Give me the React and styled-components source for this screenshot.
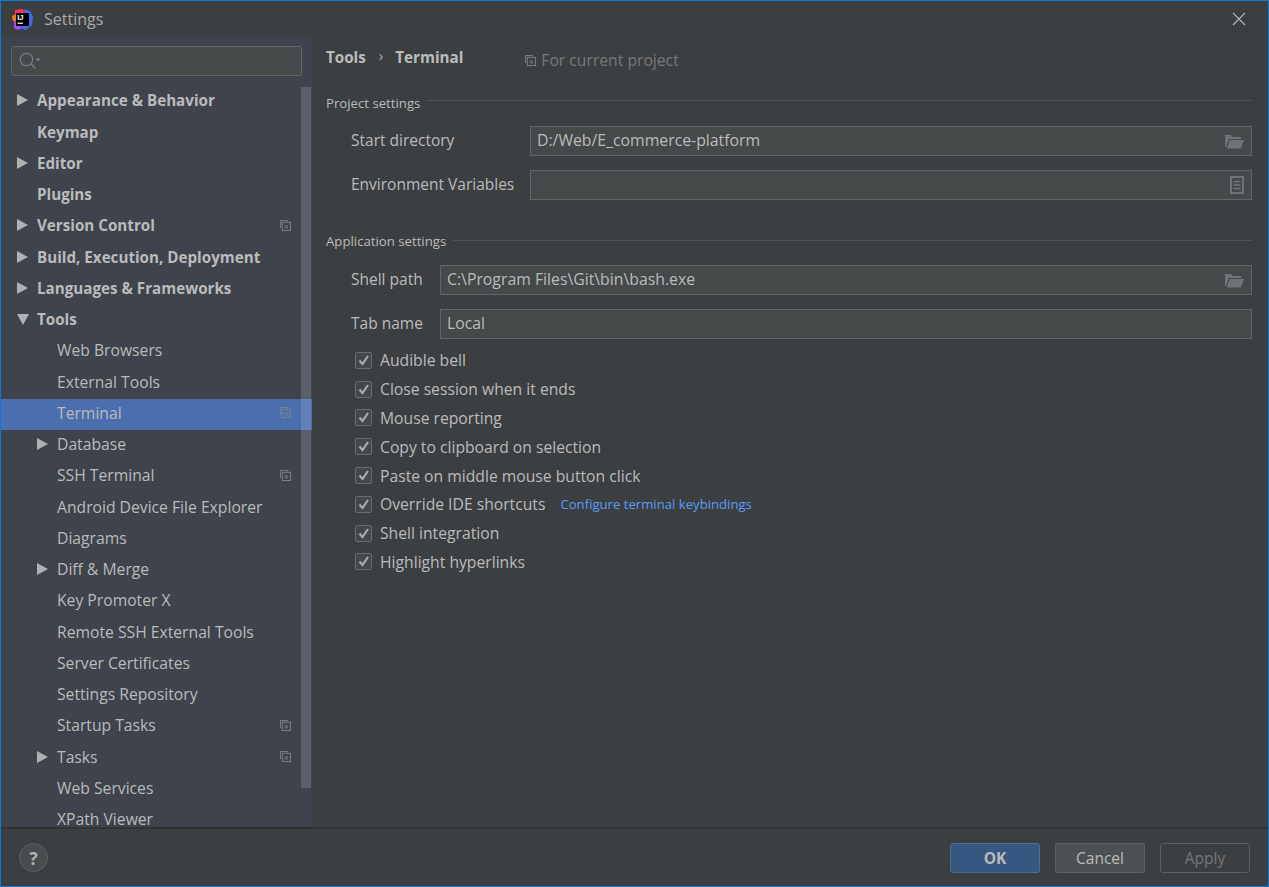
import React from 'react';
import styled, {createGlobalStyle} from 'styled-components';

const GlobalStyle = createGlobalStyle`
    html, body {
        margin: 0;
        padding: 0;
        background: #3c3f41;
    }
    body {
        font-family: "Open Sans", "Noto Sans", sans-serif;
        color: #bbbbbb;
    }
`;

const treeItems = [
    {label: 'Appearance & Behavior', top: true, arrow: 'right'},
    {label: 'Keymap', top: true},
    {label: 'Editor', top: true, arrow: 'right'},
    {label: 'Plugins', top: true},
    {label: 'Version Control', top: true, arrow: 'right', project: true},
    {label: 'Build, Execution, Deployment', top: true, arrow: 'right'},
    {label: 'Languages & Frameworks', top: true, arrow: 'right'},
    {label: 'Tools', top: true, arrow: 'down'},
    {label: 'Web Browsers'},
    {label: 'External Tools'},
    {label: 'Terminal', selected: true, project: true},
    {label: 'Database', arrow: 'right'},
    {label: 'SSH Terminal', project: true},
    {label: 'Android Device File Explorer'},
    {label: 'Diagrams'},
    {label: 'Diff & Merge', arrow: 'right'},
    {label: 'Key Promoter X'},
    {label: 'Remote SSH External Tools'},
    {label: 'Server Certificates'},
    {label: 'Settings Repository'},
    {label: 'Startup Tasks', project: true},
    {label: 'Tasks', arrow: 'right', project: true},
    {label: 'Web Services'},
    {label: 'XPath Viewer'},
];

const options = [
    'Audible bell',
    'Close session when it ends',
    'Mouse reporting',
    'Copy to clipboard on selection',
    'Paste on middle mouse button click',
    'Override IDE shortcuts',
    'Shell integration',
    'Highlight hyperlinks',
];

function ProjectIcon({size = 12}) {
    return (
        <svg width={size} height={size} viewBox="0 0 12 12" fill="none" stroke="#7f8489" strokeWidth="1">
            <path d="M8.5 1.5v-1h-8v8h1"/>
            <rect x="2.5" y="2.5" width="9" height="9"/>
            <path d="M5 6.5h4M5 8.5h4"/>
        </svg>
    );
}

function FolderIcon() {
    return (
        <svg width="19" height="15" viewBox="0 0 19 15" fill="#6d7378">
            <path d="M0 1h6l1.5 2H16v2H4L1 13H0z"/>
            <path d="M4.8 6H19l-3 8.5H1.6z"/>
        </svg>
    );
}

function DocIcon() {
    return (
        <svg width="14" height="18" viewBox="0 0 14 18" fill="none" stroke="#6d7378">
            <rect x="1" y="1" width="12" height="16" strokeWidth="2"/>
            <path d="M3.5 5.5h7M3.5 9h7M3.5 12.5h7" strokeWidth="1.4"/>
        </svg>
    );
}

function Logo() {
    return (
        <svg width="21" height="21" viewBox="0 0 21 21">
            <path d="M3 1l7-1 4 3-9 6-2 0z" fill="#fe2f6a"/>
            <path d="M0 7l4-2 1 7-4 0z" fill="#f97a12"/>
            <path d="M2 11l8 8-4 2-4-2z" fill="#b345f1"/>
            <path d="M12 0l6 2 3 6-1 8-6 5-6-2 7-12z" fill="#3f6de8"/>
            <rect x="4" y="4" width="13" height="13" fill="#000"/>
            <rect x="5.5" y="13.6" width="5.5" height="1.2" fill="#fff"/>
            <LogoText x="5.2" y="11.4">IJ</LogoText>
        </svg>
    );
}

function App() {
    return (
        <Window>
            <GlobalStyle/>
            <TitleBar>
                <Logo/>
                <TitleText>Settings</TitleText>
                <CloseButton>
                    <svg width="14" height="14" viewBox="0 0 14 14" stroke="#b4b6b8" strokeWidth="1.1">
                        <path d="M1 1l12 12M13 1L1 13"/>
                    </svg>
                </CloseButton>
            </TitleBar>

            <Body>
                <Sidebar>
                    <SearchBox>
                        <svg width="24" height="20" viewBox="0 0 24 20" fill="none" stroke="#7b8084" strokeWidth="1.2">
                            <circle cx="7.5" cy="7.5" r="6.2"/>
                            <path d="M12 12l4.5 4.5"/>
                            <path d="M16.5 6.5h5l-2.5 3z" fill="#7b8084" stroke="none"/>
                        </svg>
                    </SearchBox>
                    <Tree>
                        {treeItems.map((item) => (
                            <TreeRow key={item.label} $selected={item.selected} $nested={!item.top}>
                                <ArrowSlot>
                                    {item.arrow === 'right' && (
                                        <svg width="11" height="12" viewBox="0 0 11 12" fill="#afb1b3">
                                            <path d="M0 0l11 6-11 6z"/>
                                        </svg>
                                    )}
                                    {item.arrow === 'down' && (
                                        <svg width="12" height="11" viewBox="0 0 12 11" fill="#afb1b3">
                                            <path d="M0 0h12l-6 11z"/>
                                        </svg>
                                    )}
                                </ArrowSlot>
                                <TreeLabel $bold={item.top}>{item.label}</TreeLabel>
                                {item.project && (
                                    <TreeBadge>
                                        <ProjectIcon size={11}/>
                                    </TreeBadge>
                                )}
                            </TreeRow>
                        ))}
                        <ScrollThumb/>
                    </Tree>
                </Sidebar>

                <Content>
                    <Breadcrumbs>
                        <Crumb>Tools</Crumb>
                        <CrumbArrow>›</CrumbArrow>
                        <Crumb>Terminal</Crumb>
                        <ProjectHint>
                            <ProjectIcon size={11}/>
                            For current project
                        </ProjectHint>
                    </Breadcrumbs>

                    <SectionTitle $mt={11}>
                        <span>Project settings</span>
                        <SectionLine $shift={-6}/>
                    </SectionTitle>
                    <FieldRow $mt={12}>
                        <FieldLabel $width={179}>Start directory</FieldLabel>
                        <Field>
                            D:/Web/E_commerce-platform
                            <FieldIcon><FolderIcon/></FieldIcon>
                        </Field>
                    </FieldRow>
                    <FieldRow $mt={14}>
                        <FieldLabel $width={179}>Environment Variables</FieldLabel>
                        <Field>
                            <FieldIcon><DocIcon/></FieldIcon>
                        </Field>
                    </FieldRow>

                    <SectionTitle $mt={30}>
                        <span>Application settings</span>
                        <SectionLine $shift={-2}/>
                    </SectionTitle>
                    <FieldRow $mt={13}>
                        <FieldLabel $width={89}>Shell path</FieldLabel>
                        <Field>
                            {'C:\\Program Files\\Git\\bin\\bash.exe'}
                            <FieldIcon><FolderIcon/></FieldIcon>
                        </Field>
                    </FieldRow>
                    <FieldRow $mt={14}>
                        <FieldLabel $width={89}>Tab name</FieldLabel>
                        <Field>Local</Field>
                    </FieldRow>

                    <CheckList>
                        {options.map((label) => (
                            <CheckRow key={label}>
                                <CheckBox>
                                    <svg width="12" height="11" viewBox="0 0 12 11" fill="none" stroke="#a9abad" strokeWidth="2.2">
                                        <path d="M1.5 5.5l3 3.5 5.5-8"/>
                                    </svg>
                                </CheckBox>
                                {label}
                                {label === 'Override IDE shortcuts' && (
                                    <KeyLink>Configure terminal keybindings</KeyLink>
                                )}
                            </CheckRow>
                        ))}
                    </CheckList>
                </Content>
            </Body>

            <Footer>
                <HelpButton>?</HelpButton>
                <Buttons>
                    <Button $variant="primary">OK</Button>
                    <Button>Cancel</Button>
                    <Button $variant="disabled">Apply</Button>
                </Buttons>
            </Footer>
        </Window>
    );
}

const Window = styled.div`
    box-sizing: border-box;
    width: 1269px;
    height: 887px;
    display: flex;
    flex-direction: column;
    overflow: hidden;
    background: #3c3f41;
    border: 1px solid #0e79d1;
`;

const TitleBar = styled.div`
    flex: none;
    height: 35px;
    display: flex;
    align-items: center;
    padding: 1px 18px 0 11px;
    box-sizing: border-box;
`;

const LogoText = styled.text`
    font-family: "Liberation Sans", sans-serif;
    font-size: 7.5px;
    font-weight: 700;
    fill: #ffffff;
`;

const TitleText = styled.div`
    margin-left: 11px;
    font-size: 16px;
    color: #a9abad;
`;

const CloseButton = styled.div`
    margin-left: auto;
    display: flex;
    margin-right: 4px;
`;

const Body = styled.div`
    flex: 1;
    display: flex;
    min-height: 0;
`;

const Sidebar = styled.div`
    flex: none;
    width: 311px;
    display: flex;
    flex-direction: column;
    background: #3e434c;
`;

const SearchBox = styled.div`
    flex: none;
    box-sizing: border-box;
    height: 30px;
    margin: 10px 10px 0 10px;
    padding: 5px 0 0 7px;
    background: #45494a;
    border: 1px solid #646464;
    border-radius: 3px;
`;

const Tree = styled.div`
    position: relative;
    flex: 1;
    min-height: 0;
    overflow: hidden;
    padding-top: 10px;
`;

const ScrollThumb = styled.div`
    position: absolute;
    top: 11px;
    right: 1px;
    width: 10px;
    height: 701px;
    background: rgba(190, 195, 210, 0.22);
`;

const TreeRow = styled.div`
    box-sizing: border-box;
    height: 31.25px;
    display: flex;
    align-items: center;
    padding-bottom: 2.5px;
    padding-left: ${({$nested}) => ($nested ? '36px' : '16px')};
    background: ${({$selected}) => ($selected ? '#4b6eaf' : 'transparent')};
`;

const ArrowSlot = styled.div`
    flex: none;
    width: 20px;
    display: flex;
    align-items: center;
`;

const TreeLabel = styled.div`
    font-size: ${({$bold}) => ($bold ? '15.2px' : '15.7px')};
    font-weight: ${({$bold}) => ($bold ? 700 : 400)};
    white-space: nowrap;
`;

const TreeBadge = styled.div`
    margin-left: auto;
    margin-right: 21px;
    display: flex;
`;

const Content = styled.div`
    flex: 1;
    min-width: 0;
    padding: 0 16px 0 14px;
`;

const Breadcrumbs = styled.div`
    height: 45px;
    display: flex;
    align-items: center;
    padding-bottom: 4px;
    box-sizing: border-box;
`;

const Crumb = styled.div`
    font-size: 15.2px;
    font-weight: 700;
`;

const CrumbArrow = styled.div`
    margin: -3px 12px 0 13px;
    font-size: 15px;
    color: #a9abad;
`;

const ProjectHint = styled.div`
    margin-left: 62px;
    display: flex;
    align-items: center;
    gap: 5px;
    font-size: 15.7px;
    color: #787878;
    padding-top: 7px;
`;

const SectionTitle = styled.div`
    display: flex;
    align-items: center;
    height: 22px;
    margin-top: ${({$mt}) => $mt}px;
    font-size: 13.2px;
    gap: 7px;
`;

const SectionLine = styled.div`
    flex: 1;
    height: 1px;
    margin-top: ${({$shift}) => $shift}px;
    background: #515151;
`;

const FieldRow = styled.div`
    display: flex;
    align-items: center;
    margin-top: ${({$mt}) => $mt}px;
    padding-left: 25px;
`;

const FieldLabel = styled.div`
    flex: none;
    width: ${({$width}) => $width}px;
    padding-bottom: 2px;
    font-size: 15.5px;
    white-space: nowrap;
`;

const Field = styled.div`
    position: relative;
    flex: 1;
    box-sizing: border-box;
    height: 30px;
    line-height: 27px;
    padding-left: 6px;
    font-size: 15.8px;
    background: #45494a;
    border: 1px solid #646464;
`;

const FieldIcon = styled.div`
    position: absolute;
    top: 0;
    right: 7px;
    height: 28px;
    display: flex;
    align-items: center;
`;

const CheckList = styled.div`
    margin-top: 7px;
    padding-left: 29px;
`;

const CheckRow = styled.div`
    height: 28.8px;
    display: flex;
    align-items: center;
    font-size: 15.7px;
`;

const CheckBox = styled.div`
    flex: none;
    box-sizing: border-box;
    width: 17px;
    height: 17px;
    margin-right: 8px;
    display: flex;
    align-items: center;
    justify-content: center;
    background: #43494a;
    border: 1px solid #6b6b6b;
    border-radius: 2px;
`;

const KeyLink = styled.span`
    margin-left: 15px;
    font-size: 13.15px;
    color: #589df6;
`;

const Footer = styled.div`
    flex: none;
    box-sizing: border-box;
    height: 59px;
    display: flex;
    align-items: center;
    justify-content: space-between;
    padding: 0 18px 0 18px;
    border-top: 2px solid #323232;
`;

const HelpButton = styled.div`
    box-sizing: border-box;
    width: 29px;
    height: 29px;
    display: flex;
    align-items: center;
    justify-content: center;
    font-size: 18px;
    font-weight: 700;
    color: #afb1b3;
    background: #494c4e;
    border: 1px solid #5e6060;
    border-radius: 50%;
`;

const Buttons = styled.div`
    display: flex;
    gap: 15px;
`;

const buttonStyles = {
    primary: 'background: #365880; border-color: #4c708c; font-weight: 700;',
    disabled: 'background: transparent; border-color: #5e6060; color: #777777;',
};

const Button = styled.div`
    box-sizing: border-box;
    width: 90px;
    height: 30px;
    display: flex;
    align-items: center;
    justify-content: center;
    font-size: 15.5px;
    background: #4c5052;
    border: 1px solid #5e6060;
    border-radius: 3px;
    ${({$variant}) => buttonStyles[$variant] || ''}
`;

export default App;
